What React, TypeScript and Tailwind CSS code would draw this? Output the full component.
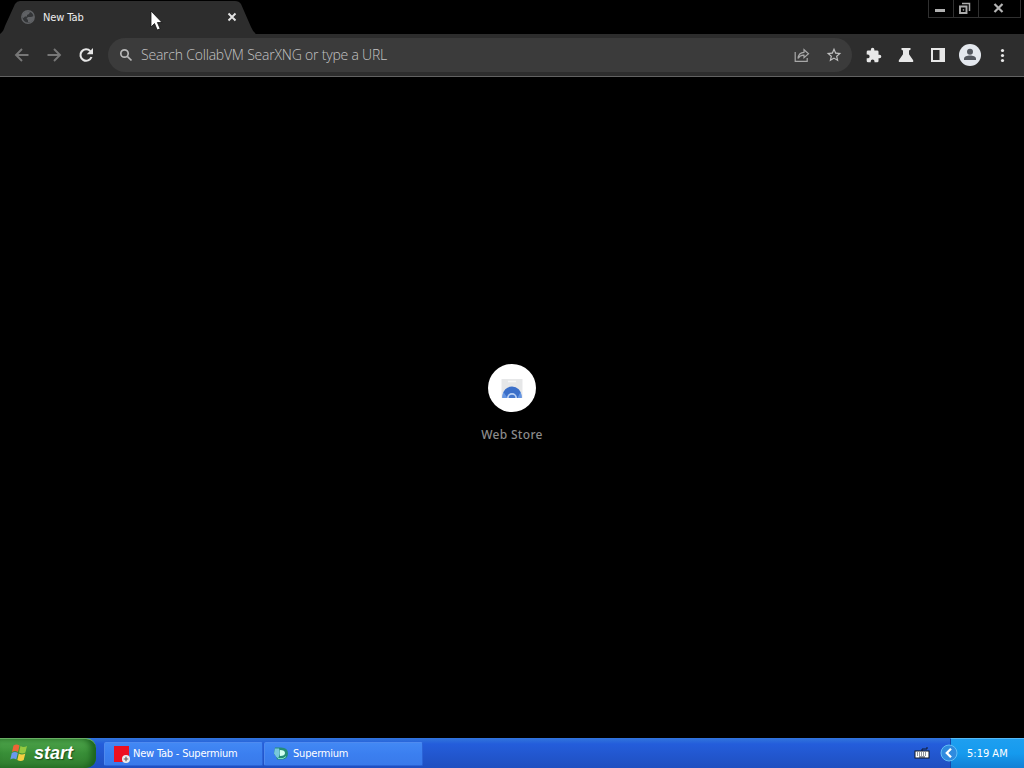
import type { ReactNode } from 'react';

interface TaskButtonProps {
  title: string;
  icon: ReactNode;
}

function IconButton({ label, children }: { label: string; children: ReactNode }) {
  return (
    <button aria-label={label} className="flex h-8 w-8 shrink-0 items-center justify-center">
      {children}
    </button>
  );
}

function GlobeIcon() {
  return (
    <svg width="16" height="16" viewBox="0 0 16 16" className="shrink-0">
      <circle cx="8" cy="8" r="6.2" fill="#333537" stroke="#606265" strokeWidth="1.400" />
      <path d="M3 4.500 7 2l3 1-1 2-2 1v1.500H5L3.500 9 2 8ZM8 8h3l3-1v3l-3 3H8v-2L6.500 9.500Z" fill="#606265" />
    </svg>
  );
}

function TabStrip() {
  return (
    <div className="flex h-[34px] items-start justify-between bg-black">
      <div className="relative h-[34px] w-[256px]">
        <svg width="256" height="34" className="absolute inset-0">
          <path d="M0 34C3 32 4 29 5 26L15 4Q17 1 20 1H235Q239 1 241 4L251 27Q253 32 256 34Z" fill="#2d2d2d" />
        </svg>
        <div className="relative flex h-[34px] items-center pl-5 pr-[18px]">
          <GlobeIcon />
          <span className="ml-[7px] flex-1 pt-0.5 text-[11px] tracking-[-0.1px] text-[#ededed]">New Tab</span>
          <svg width="12" height="12" viewBox="0 0 12 12" className="shrink-0">
            <path d="m2.500 2.500 7 7m0-7-7 7" stroke="#e4e4e4" strokeWidth="1.900" />
          </svg>
        </div>
      </div>
      <div className="mr-[3px] flex h-[18px] w-[93px] border border-t-0 border-[#303030]">
        <button aria-label="Minimize" className="w-[25px] border-r border-[#303030]">
          <svg width="24" height="17">
            <path d="M6 10.500h10" stroke="#b0b0b0" strokeWidth="3" />
          </svg>
        </button>
        <button aria-label="Restore" className="w-[25px] border-r border-[#303030]">
          <svg width="24" height="17" fill="none" stroke="#acacac">
            <path d="M8 3.500h7.500V11" strokeWidth="1.500" />
            <path d="M6 6.500h6.500v6.500H6Z" strokeWidth="1.900" />
            <path d="M9 9.500h.8v.8H9Z" strokeWidth="0.800" />
          </svg>
        </button>
        <button aria-label="Close" className="flex-1">
          <svg width="41" height="17">
            <path d="m15.500 4 8 8m0-8-8 8" stroke="#b4b4b4" strokeWidth="2.200" />
          </svg>
        </button>
      </div>
    </div>
  );
}

function Omnibox() {
  return (
    <div className="ml-[6px] flex h-[34px] w-[744px] items-center rounded-full bg-[#3b3b3b] pl-[11px] pr-[2px]">
      <svg width="14" height="14" viewBox="0 0 14 14" fill="none" stroke="#b8b8b8" strokeWidth="1.700" className="shrink-0">
        <circle cx="5.500" cy="5.500" r="3.700" />
        <path d="m8.300 8.300 4.200 4.200" />
      </svg>
      <span className="ml-2 flex-1 whitespace-nowrap pb-0.5 font-['Open_Sans','Noto_Sans',sans-serif] text-[14px] font-light tracking-[-0.21px] text-[#c4c4c4]">
        Search CollabVM SearXNG or type a URL
      </span>
      <IconButton label="Share">
        <svg width="16" height="16" viewBox="0 0 16 16" fill="none" stroke="#a8a8a8" strokeWidth="1.200">
          <path d="M1.200 5v9.300h12V11" />
          <path d="M4 11.500C4.300 7.800 6.500 5.500 10 5.300V2.700l4.500 4-4.500 4V8.200C7.500 8 5.500 9 4 11.500Z" />
        </svg>
      </IconButton>
      <IconButton label="Bookmark">
        <svg width="16" height="16" viewBox="1 1 22 22" fill="#c0c0c0">
          <path d="m22 9.240-7.190-.62L12 2 9.190 8.630 2 9.240l5.460 4.730L5.820 21 12 17.270 18.180 21l-1.630-7.030L22 9.240ZM12 15.400l-3.760 2.270 1-4.280-3.320-2.880 4.380-.38L12 6.100l1.710 4.040 4.380.38-3.320 2.880 1 4.280L12 15.400Z" />
        </svg>
      </IconButton>
    </div>
  );
}

function Toolbar() {
  return (
    <div className="flex h-[43px] items-center border-b border-[#626262] bg-[#2d2d2d] pl-1.5">
      <IconButton label="Back">
        <svg width="16" height="16" viewBox="0 0 16 16" fill="none" stroke="#777" strokeWidth="1.900">
          <path d="M14.500 8H2M8 2 2 8l6 6" />
        </svg>
      </IconButton>
      <IconButton label="Forward">
        <svg width="16" height="16" viewBox="0 0 16 16" fill="none" stroke="#777" strokeWidth="1.900">
          <path d="M1.500 8H14M8 2l6 6-6 6" />
        </svg>
      </IconButton>
      <IconButton label="Reload">
        <svg width="16" height="16" viewBox="0 0 16 16">
          <path d="M12.300 4.100A5.700 5.700 0 1 0 13.500 10" fill="none" stroke="#e6e6e6" strokeWidth="2.100" />
          <path d="M15 1v6.300H8.700Z" fill="#e6e6e6" />
        </svg>
      </IconButton>
      <Omnibox />
      <div className="ml-[6px] flex">
        <IconButton label="Extensions">
          <svg width="16" height="16" viewBox="1 0 23 23" fill="#e8e8e8">
            <path d="M20.500 11H19V7a2 2 0 0 0-2-2h-4V3.500a2.500 2.500 0 0 0-5 0V5H4a2 2 0 0 0-2 2v3.800h1.500a2.700 2.700 0 0 1 0 5.400H2V20a2 2 0 0 0 2 2h3.800v-1.500a2.700 2.700 0 0 1 5.400 0V22H17a2 2 0 0 0 2-2v-4h1.500a2.500 2.500 0 0 0 0-5Z" />
          </svg>
        </IconButton>
        <IconButton label="Experiments">
          <svg width="16" height="16" viewBox="0 0 16 16" fill="#e8e8e8">
            <path d="M3.500 1h9v1.700l-1.500.8v3.800l4 5.700q1 2-1 2H2q-2 0-1-2l4-5.700V3.500l-1.500-.8Z" />
          </svg>
        </IconButton>
        <IconButton label="Side panel">
          <svg width="16" height="16" viewBox="0 0 16 16">
            <path d="M1 1h14v14H1Zm2 2v10h6.500V3Z" fill="#e8e8e8" fillRule="evenodd" />
          </svg>
        </IconButton>
        <IconButton label="Profile">
          <svg width="22" height="22" viewBox="0 0 22 22">
            <circle cx="11" cy="11" r="11" fill="#e4e8ee" />
            <circle cx="11" cy="7.700" r="3" fill="#53575f" />
            <path d="M5 16v-1.200c0-2.200 3-3.300 6-3.300s6 1.100 6 3.300V16Z" fill="#53575f" />
          </svg>
        </IconButton>
        <IconButton label="Menu">
          <svg width="16" height="16" viewBox="0 0 16 16" fill="#e8e8e8">
            <circle cx="8.500" cy="3.500" r="1.600" />
            <circle cx="8.500" cy="8.500" r="1.600" />
            <circle cx="8.500" cy="13.500" r="1.600" />
          </svg>
        </IconButton>
      </div>
    </div>
  );
}

function WebStoreTile() {
  return (
    <div className="flex flex-col items-center">
      <div className="flex h-12 w-12 items-center justify-center rounded-full bg-white">
        <svg width="24" height="24" viewBox="0 0 24 24">
          <path d="M1.500 3h21v19h-21Z" fill="#e6e7e8" />
          <path d="M8 5.500h8" stroke="#f6f6f6" strokeWidth="1.500" />
          <path d="M2.500 22v-2a9.500 9.500 0 0 1 19 0v2Z" fill="#3b6fc9" />
          <path d="M2.500 22v-2c0-1.500.4-3 1-4l4 6ZM21.500 22v-2c0-1.500-.4-3-1-4l-3 6Z" fill="#6495e3" />
          <path d="M7 22a5 5 0 0 1 10 0Z" fill="#b9d0f4" />
          <path d="M8.700 22a3.300 3.300 0 0 1 6.600 0Z" fill="#4376cc" />
        </svg>
      </div>
      <span className="mt-3.5 font-['Noto_Sans',sans-serif] text-[12px] font-medium leading-[18px] tracking-[0.3px] text-[#8b8b8b]">
        Web Store
      </span>
    </div>
  );
}

function TaskButton({ title, icon }: TaskButtonProps) {
  return (
    <button className="flex h-6 w-[159px] items-center rounded-[2px] border border-[#2b64d7] border-t-[#4f8bf0] border-l-[#4f89ee] bg-linear-to-b from-[#4288f4] via-[#3b7ff0] to-[#397aea] pl-2 text-[11px] text-white">
      <span className="flex w-[17px] shrink-0">{icon}</span>
      <span className="ml-[3px] whitespace-nowrap pt-px tracking-[-0.2px]">{title}</span>
    </button>
  );
}

function Taskbar() {
  return (
    <div className="flex h-[30px] items-stretch bg-linear-to-b from-[#3275dc] from-0% via-[#245ddb] via-20% to-[#1f4fc0]">
      <button className="flex w-[96px] items-center rounded-r-[10px] border-t border-[#69ae65] bg-linear-to-b from-[#51a84e] via-[#388e37] to-[#307c2e] pb-px pl-2.5 shadow-[inset_-5px_0_6px_#1c631e]">
        <svg width="20" height="20" viewBox="0 0 20 20">
          <path d="M3.500 2.500q3-2 6 0L8 9q-3-2-6 0Z" fill="#ed6436" />
          <path d="M10.500 3q3 2 6.500 0l-1.600 6.500q-3 2-6.400 0Z" fill="#94c940" />
          <path d="M1.800 10q3-2 6 0L6.300 16.500q-3-2-6 0Z" fill="#6999ee" />
          <path d="M8.800 10.500q3 2 6.500 0L13.700 17q-3 2-6.400 0Z" fill="#f5cf42" />
        </svg>
        <span className="ml-1 font-['Liberation_Sans',sans-serif] text-[18px] font-bold italic leading-5 text-white [text-shadow:1px_1px_1px_#1d4b1c]">
          start
        </span>
      </button>
      <div className="ml-2 flex flex-1 items-center gap-px pt-px">
        <TaskButton
          title="New Tab - Supermium"
          icon={
            <svg width="17" height="18" viewBox="0 0 17 18">
              <path d="M1 1h15v16H1Z" fill="#ed1020" />
              <circle cx="13" cy="14" r="4" fill="#ececec" />
              <path d="M13 11.700v4.600M10.700 14h4.600" stroke="#5f6065" strokeWidth="1.200" />
            </svg>
          }
        />
        <TaskButton
          title="Supermium"
          icon={
            <svg width="16" height="16" viewBox="0 0 16 16">
              <path d="M2 1.500h6q7 0 7 6t-7 6H4L3 10 1 8Z" fill="#248d78" />
              <path d="M2 2.500h4q2 5-1 10l-2-2-2-3Z" fill="#78c8dc" />
              <path d="M7 4q5 0 5 3t-5 3Z" fill="#d2fff1" />
              <path d="M5 12.500q6 1 8-2" fill="none" stroke="#78dfc2" />
            </svg>
          }
        />
      </div>
      <div className="flex w-9 items-center">
        <svg width="16" height="14" viewBox="0 0 16 14">
          <path d="M8 5V3h5V1" fill="none" stroke="#131b30" />
          <rect x="1" y="5" width="14" height="7" fill="#fff" stroke="#111724" />
          <path d="M3 7h10M3 9h10" stroke="#222a38" strokeWidth="1" strokeDasharray="1 1" />
          <path d="M5 11h6" stroke="#222a38" />
        </svg>
      </div>
      <div className="relative flex w-[74px] items-center border-l border-t border-[#1745a8] border-t-[#56b9f8] bg-linear-to-b from-[#1e9ff0] via-[#159aee] to-[#1280d5] pl-4">
        <svg width="18" height="18" viewBox="0 0 18 18" className="absolute -left-[11px] top-[5px]">
          <circle cx="9" cy="9" r="8" fill="#2f8bdf" stroke="#63bff6" />
          <path d="M11 4.800 6.800 9l4.200 4.200" fill="none" stroke="#fff" strokeWidth="2.300" />
        </svg>
        <span className="whitespace-nowrap pt-px text-[11px] text-white">5:19 AM</span>
      </div>
    </div>
  );
}

function Cursor() {
  return (
    <svg width="13" height="21" viewBox="0 0 13 21" className="absolute left-[150px] top-[10px]">
      <path d="M1 1v16l3.500-3.500L7.200 20l3-1.200-2.800-6.300H12Z" fill="#fff" stroke="#111" strokeWidth="0.800" />
    </svg>
  );
}

export default function App() {
  return (
    <div className="relative flex h-screen w-full flex-col overflow-hidden bg-black font-['DejaVu_Sans_Condensed','Noto_Sans',sans-serif]">
      <TabStrip />
      <Toolbar />
      <main className="flex flex-1 justify-center pt-[287px]">
        <WebStoreTile />
      </main>
      <Taskbar />
      <Cursor />
    </div>
  );
}
